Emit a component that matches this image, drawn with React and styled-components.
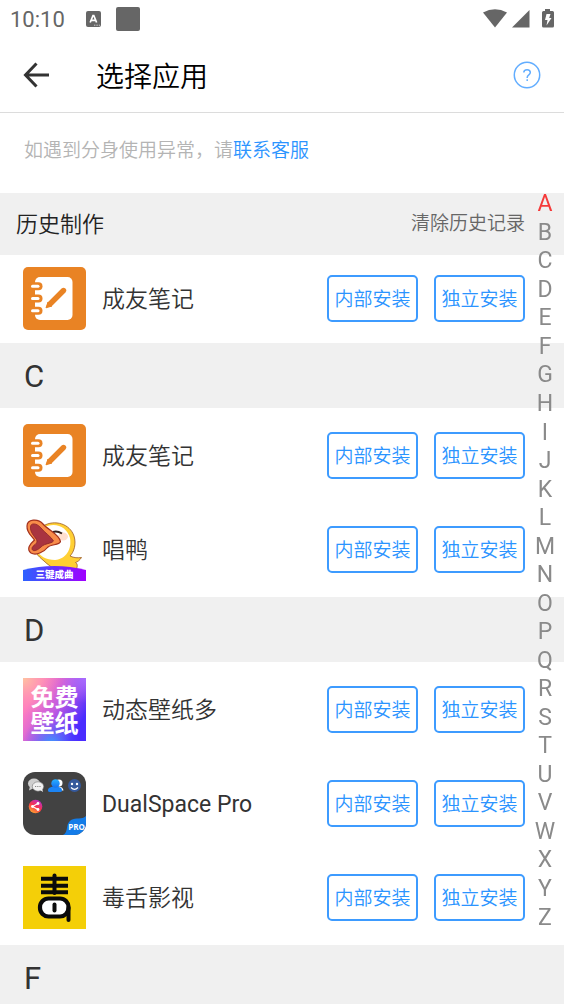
import React from 'react'
import styled, { createGlobalStyle } from 'styled-components'

const GlobalStyle = createGlobalStyle`
  * {
    box-sizing: border-box;
  }

  body {
    margin: 0;
    background: #fff;
    font-family: Roboto, "Noto Sans CJK SC", sans-serif;
    color: #333;
  }

  ul, h1, h2, p {
    margin: 0;
    padding: 0;
    list-style: none;
    font-weight: normal;
  }
`

const letters = 'ABCDEFGHIJKLMNOPQRSTUVWXYZ'.split('')

const Page = styled.div`
  height: 100vh;
  display: flex;
  flex-direction: column;
`

const StatusBar = styled.div`
  height: 38px;
  flex-shrink: 0;
  padding: 0 10px;
  display: flex;
  align-items: center;
  justify-content: space-between;
  color: #666;
`

const StatusGroup = styled.div`
  display: flex;
  align-items: center;
`

const Clock = styled.span`
  width: 76px;
  font-size: 22px;
  line-height: 38px;
  padding-top: 2px;
`

const Notification = styled.span`
  width: 24px;
  height: 24px;
  margin-left: 15px;
  border-radius: 2px;
  background: #666;
`

const Header = styled.header`
  height: 75px;
  flex-shrink: 0;
  padding: 0 23px;
  display: flex;
  align-items: center;
  border-bottom: 1px solid #dcdcdc;
`

const IconButton = styled.button`
  display: flex;
  padding: 0;
  border: none;
  background: none;
  cursor: pointer;
`

const Title = styled.h1`
  flex: 1;
  margin-left: 47px;
  padding-top: 6px;
  font-size: 28px;
  font-weight: 350;
  line-height: 40px;
  color: #000;
`

const Content = styled.main`
  flex: 1;
  overflow-y: auto;
  scrollbar-width: none;
`

const Notice = styled.p`
  height: 80px;
  padding: 0 24px;
  font-size: 19px;
  font-weight: 350;
  line-height: 76px;
  color: #b4b4b4;
`

const ContactLink = styled.a`
  color: #2b94ff;
  text-decoration: none;
`

const HistoryBar = styled.div`
  height: 62px;
  padding: 0 39px 0 16px;
  display: flex;
  align-items: center;
  justify-content: space-between;
  background: #f0f0f0;
`

const HistoryTitle = styled.h2`
  padding-top: 2px;
  font-size: 22px;
  font-weight: 350;
  line-height: 32px;
  color: #222;
`

const ClearButton = styled.button`
  padding: 0;
  border: none;
  background: none;
  font-family: inherit;
  font-size: 19px;
  font-weight: 350;
  line-height: 32px;
  color: #666;
  cursor: pointer;
`

const SectionTitle = styled.h2`
  height: 65px;
  padding: 0 24px;
  background: #f0f0f0;
  font-size: 31px;
  line-height: 67px;
`

const AppList = styled.ul`
  padding: ${(props) => (props.$compact ? '12px 39px 13px 23px' : '16px 39px 16px 23px')};
  display: flex;
  flex-direction: column;
  gap: 31px;
`

const AppRow = styled.li`
  height: 63px;
  display: flex;
  align-items: center;
`

const AppIcon = styled.svg`
  width: 63px;
  height: 63px;
  flex-shrink: 0;
`

const AppName = styled.span`
  flex: 1;
  margin-left: 16px;
  padding-top: 2px;
  font-size: 23px;
  font-weight: ${(props) => (props.$latin ? 400 : 350)};
  line-height: 34px;
`

const InstallButton = styled.button`
  width: 91px;
  height: 47px;
  margin-left: 16px;
  padding: 0 0 2px;
  border: 2px solid #3d9bff;
  border-radius: 5px;
  background: #fff;
  font-family: inherit;
  font-size: 19px;
  font-weight: 350;
  color: #2b94ff;
  cursor: pointer;
`

// the letter index floats over the scrolling list
const LetterIndex = styled.nav`
  position: fixed;
  top: 190px;
  right: 0;
  bottom: 72px;
  width: 38px;
  display: flex;
  flex-direction: column;
`

const Letter = styled.a`
  flex: 1;
  display: flex;
  align-items: center;
  justify-content: center;
  font-size: 23px;
  line-height: 28px;
  text-decoration: none;
  color: ${(props) => (props.$active ? '#f53a3a' : '#8a8a8a')};
`

const NotesIcon = () => (
  <AppIcon viewBox="0 0 63 63" aria-hidden="true">
    <rect width="63" height="63" rx="5" fill="#e98324" />
    <rect x="12" y="10" width="37.5" height="43" rx="5" fill="#fff" />
    {[19.3, 31.5, 43.7].map((y) => (
      <g key={y}>
        <path d={`M9 ${y}H15.5`} stroke="#e98324" strokeWidth="8" strokeLinecap="round" />
        <path d={`M9.5 ${y}H15`} stroke="#fff" strokeWidth="3" strokeLinecap="round" />
      </g>
    ))}
    <path d="M40.5 23.5L27 37" stroke="#e98324" strokeWidth="5.4" strokeLinecap="round" />
    <path d="M25 35L23 40.8L29 39Z" fill="#e98324" stroke="#e98324" strokeLinejoin="round" />
  </AppIcon>
)

const DuckIcon = () => (
  <AppIcon viewBox="0 0 63 63" aria-hidden="true">
    <defs>
      <linearGradient id="duckBanner">
        <stop offset="0" stopColor="#2c62ff" />
        <stop offset="1" stopColor="#a000ff" />
      </linearGradient>
    </defs>
    <path
      d="M20 8C32 1 47 6 51 18C53.5 26 51 34 47 38C51 40 55 40 58.5 39.5C57 42 54.5 44 52.5 44.5C55 46 54.5 49 53 52H32C29 49 25 47 21 43C15 38 10 33 10 26Z"
      fill="#ffd034"
      stroke="#9c5a25"
      strokeWidth="0.8"
    />
    <path d="M20 10C32 3 44 9 47 20C49 31 43 41 32 42C23 42 17 38 14 33Z" fill="#fff" />
    <ellipse cx="40" cy="18.5" rx="5" ry="4" fill="#ffdfcf" />
    <path d="M30 14Q34 12.5 39 15.5" fill="none" stroke="#33201d" strokeWidth="2" />
    <path
      d="M4 8C4 1 15 0 20 6C25 12 36 16 37.5 23.5C36 28 28 25.5 24.5 29.5C21 34 13 38 8 35C3 31 7 26 11.5 22C9 18 3.5 15 4 8Z"
      fill="#f88c4a"
      stroke="#a3311d"
      strokeWidth="1.2"
    />
    <path
      d="M7.5 9C7.5 4.5 14 5 18 10C22 15 28 18.5 30.5 23C28 26 22 25 18 29C14 33 9 34 9 30.5C9 27 16 26 13.5 21.5C11 18 7 14 7.5 9Z"
      fill="#a93440"
      stroke="#8b2424"
      strokeWidth="0.8"
    />
    <path d="M0 52Q31.5 44 63 52V63H0Z" fill="url(#duckBanner)" />
    <text x="31.5" y="59.5" textAnchor="middle" fontSize="9.5" fontWeight="900" fill="#fff">
      三键成曲
    </text>
  </AppIcon>
)

const WallpaperIcon = () => (
  <AppIcon viewBox="0 0 63 63" aria-hidden="true">
    <defs>
      <linearGradient id="paperBase" x1="0" y1="0.2" x2="1" y2="0.8">
        <stop offset="0.15" stopColor="#ff7cc0" />
        <stop offset="0.5" stopColor="#c45ce0" />
        <stop offset="0.9" stopColor="#4a2cff" />
      </linearGradient>
      <radialGradient id="paperPeach" cx="0" cy="0" r="0.6">
        <stop offset="0" stopColor="#ffc4a0" />
        <stop offset="1" stopColor="#ff90b4" stopOpacity="0" />
      </radialGradient>
      <radialGradient id="paperBlue" cx="0.45" cy="1.05" r="0.45">
        <stop offset="0" stopColor="#3aa0ff" />
        <stop offset="1" stopColor="#5a50ff" stopOpacity="0" />
      </radialGradient>
      <radialGradient id="paperViolet" cx="1" cy="0" r="0.4">
        <stop offset="0" stopColor="#a86cff" />
        <stop offset="1" stopColor="#a86cff" stopOpacity="0" />
      </radialGradient>
    </defs>
    <rect width="63" height="63" fill="url(#paperBase)" />
    <rect width="63" height="63" fill="url(#paperPeach)" />
    <rect width="63" height="63" fill="url(#paperBlue)" />
    <rect width="63" height="63" fill="url(#paperViolet)" />
    <g fill="#fff" fontSize="24" fontWeight="700" textAnchor="middle">
      <text x="31.5" y="28">免费</text>
      <text x="31.5" y="54">壁纸</text>
    </g>
  </AppIcon>
)

const DualSpaceIcon = () => (
  <AppIcon viewBox="0 0 63 63" aria-hidden="true">
    <defs>
      <clipPath id="dualClip">
        <rect width="63" height="63" rx="12" />
      </clipPath>
      <linearGradient id="dualShare" x1="0.8" y1="0" x2="0.2" y2="1">
        <stop offset="0" stopColor="#b02cd8" />
        <stop offset="0.5" stopColor="#f8344c" />
        <stop offset="1" stopColor="#ffb02c" />
      </linearGradient>
      <linearGradient id="dualPeople" x1="0" y1="0" x2="0" y2="1">
        <stop offset="0" stopColor="#29b0ff" />
        <stop offset="1" stopColor="#1470f0" />
      </linearGradient>
    </defs>
    <g clipPath="url(#dualClip)">
      <rect width="63" height="63" fill="#424242" />
      <path d="M40 63C46 60 42 52 48 48C53 45 59 48 63 44V63Z" fill="#147ce8" />
      <ellipse cx="11" cy="11.5" rx="6" ry="5" fill="#cfcfcf" />
      <path d="M7 14L6 18.5L11 16Z" fill="#cfcfcf" />
      <ellipse cx="15" cy="14.5" rx="5.7" ry="4.7" fill="#f2f2f2" stroke="#777" strokeWidth="0.6" />
      <path d="M17 18L20 20L19 16Z" fill="#f2f2f2" />
      <path d="M12 14.5H18" stroke="#888" strokeWidth="1.2" strokeDasharray="1.2 1" />
      <circle cx="36" cy="11" r="3.5" fill="#fff" />
      <path d="M33 18.5C34 13 40 14 40.5 18.5Z" fill="#fff" />
      <path d="M25 18.5C25 15 28.5 15 32 14.5C36 15 39 15 39 18.5Q39 20 37 20H27Q25 20 25 18.5Z" fill="#1c84f4" />
      <circle cx="32.5" cy="11.5" r="4.2" fill="url(#dualPeople)" />
      <circle cx="51.5" cy="13.5" r="6.5" fill="#35599c" />
      <circle cx="49" cy="12" r="1.2" fill="#fff" />
      <circle cx="54" cy="12" r="1.2" fill="#fff" />
      <path d="M48 15.5Q51.5 19 55 15.5" fill="none" stroke="#fff" strokeWidth="1.2" />
      <circle cx="12.5" cy="34.5" r="6.8" fill="url(#dualShare)" />
      <path d="M15 31.5L9.5 34.5L15 37.5" fill="none" stroke="#fff" strokeWidth="1.1" />
      <g fill="#fff">
        <circle cx="15" cy="31.5" r="1.4" />
        <circle cx="9.5" cy="34.5" r="1.4" />
        <circle cx="15" cy="37.5" r="1.4" />
      </g>
      <text
        x="53.5"
        y="57.5"
        textAnchor="middle"
        fontFamily="Open Sans"
        fontSize="8"
        fontWeight="700"
        fill="#fff"
      >
        PRO
      </text>
    </g>
  </AppIcon>
)

const MovieIcon = () => (
  <AppIcon viewBox="0 0 63 63" aria-hidden="true">
    <rect width="63" height="63" fill="#f4cf08" />
    <g fill="none" stroke="#0b0b0b" strokeWidth="4">
      <path d="M18 12.7H45M18 19.7H45M18 26.3H45" />
      <path d="M31.5 9.5V27" strokeLinecap="round" />
    </g>
    <rect
      x="17"
      y="32.5"
      width="28.5"
      height="18"
      rx="8.5"
      fill="#fff"
      stroke="#0b0b0b"
      strokeWidth="4.2"
    />
    <path d="M45.5 42V54" stroke="#0b0b0b" strokeWidth="4" strokeLinecap="round" />
    <path d="M31.5 38.5V44.5" stroke="#0b0b0b" strokeWidth="4" strokeLinecap="round" />
  </AppIcon>
)

const sections = [
  {
    letter: 'C',
    apps: [
      { name: '成友笔记', Icon: NotesIcon },
      { name: '唱鸭', Icon: DuckIcon },
    ],
  },
  {
    letter: 'D',
    apps: [
      { name: '动态壁纸多', Icon: WallpaperIcon },
      { name: 'DualSpace Pro', Icon: DualSpaceIcon, latin: true },
      { name: '毒舌影视', Icon: MovieIcon },
    ],
  },
  { letter: 'F', apps: [] },
]

const AppItem = ({ name, Icon, latin }) => (
  <AppRow>
    <Icon />
    <AppName $latin={latin}>{name}</AppName>
    <InstallButton type="button">内部安装</InstallButton>
    <InstallButton type="button">独立安装</InstallButton>
  </AppRow>
)

const App = () => {
  return (
    <Page>
      <GlobalStyle />
      <StatusBar>
        <StatusGroup>
          <Clock>10:10</Clock>
          <svg width="15" height="16" viewBox="0 0 15 16" aria-hidden="true">
            <rect width="15" height="16" rx="2" fill="#666" />
            <path d="M4.2 11.5L7 4.5H7.8L10.6 11.5M5.3 9.3H9.5" fill="none" stroke="#fff" strokeWidth="1.7" />
            <path d="M8 14.2H14" stroke="#ccc" strokeWidth="1" strokeDasharray="1.4 1" />
          </svg>
          <Notification />
        </StatusGroup>
        <svg width="71" height="20" viewBox="0 0 71 20" fill="#666" aria-hidden="true">
          <path d="M0 3.5Q12 -3 24 3.5L12 18.5Z" />
          <path d="M46.5 1V18.5H29Z" />
          <path d="M62 0H67V2H69.5Q71 2 71 3.5V17Q71 18.5 69.5 18.5H60.5Q59 18.5 59 17V3.5Q59 2 60.5 2H62Z" />
          <path d="M63.5 5H67.5L66.2 9H68.5L63.5 16.5L64.5 11H62Z" fill="#fff" />
        </svg>
      </StatusBar>

      <Header>
        <IconButton type="button" aria-label="返回">
          <svg width="26" height="26" viewBox="0 0 26 26" fill="none" stroke="#333" strokeWidth="3">
            <path d="M13.5 1.5L2.5 13L13.5 24.5M2.5 13H26" />
          </svg>
        </IconButton>
        <Title>选择应用</Title>
        <IconButton type="button" aria-label="帮助">
          <svg width="28" height="28" viewBox="0 0 28 28" fill="none" stroke="#62adff" strokeWidth="1.5">
            <circle cx="14" cy="14" r="12.7" />
            <path d="M10.8 11.5C10.8 7.8 17.3 7.8 17.3 11.5C17.3 14 14.2 13.7 14.2 16.5V17" />
            <path d="M14.2 18.3V20" />
          </svg>
        </IconButton>
      </Header>

      <Content>
        <Notice>
          如遇到分身使用异常，请<ContactLink href="#contact">联系客服</ContactLink>
        </Notice>

        <HistoryBar>
          <HistoryTitle>历史制作</HistoryTitle>
          <ClearButton type="button">清除历史记录</ClearButton>
        </HistoryBar>
        <AppList $compact>
          <AppItem name="成友笔记" Icon={NotesIcon} />
        </AppList>

        {sections.map((section) => (
          <section key={section.letter} id={section.letter}>
            <SectionTitle>{section.letter}</SectionTitle>
            <AppList>
              {section.apps.map((app) => (
                <AppItem key={app.name} {...app} />
              ))}
            </AppList>
          </section>
        ))}
      </Content>

      <LetterIndex>
        {letters.map((letter) => (
          <Letter key={letter} href={`#${letter}`} $active={letter === 'A'}>
            {letter}
          </Letter>
        ))}
      </LetterIndex>
    </Page>
  )
}

export default App
